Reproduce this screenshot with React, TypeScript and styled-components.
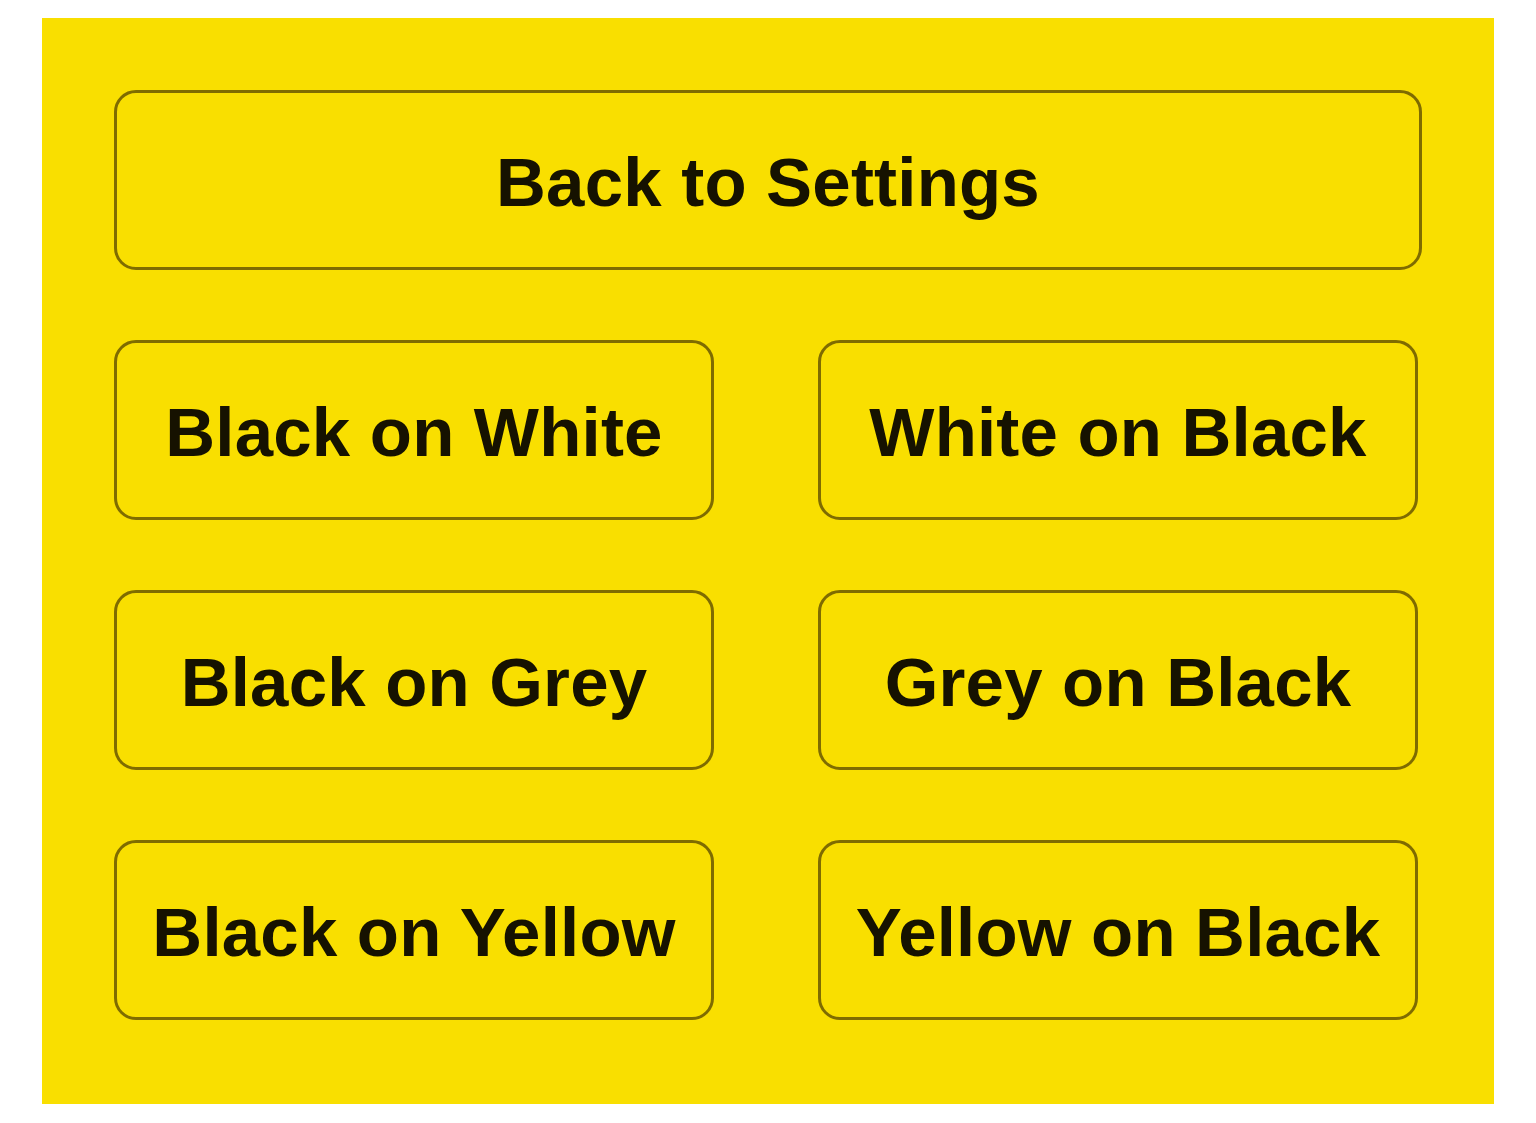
import React from "react";
import styled, { createGlobalStyle } from "styled-components";

const Global = createGlobalStyle`
  html, body { margin: 0; padding: 0; background: #ffffff; }
  body { font-family: "Liberation Sans", Arial, sans-serif; }
`;

const Page = styled.div`
  padding: 18px 0 0 42px;
  width: 1536px;
  height: 1123px;
  box-sizing: border-box;
`;

const Panel = styled.div`
  width: 1452px;
  height: 1086px;
  box-sizing: border-box;
  background: #f9df00;
  padding: 72px 72px 0 72px;
  display: flex;
  flex-direction: column;
  gap: 70px;
`;

const Grid = styled.div`
  display: grid;
  grid-template-columns: 600px 600px;
  column-gap: 104px;
  row-gap: 70px;
`;

const Button = styled.button`
  height: 180px;
  box-sizing: border-box;
  background: transparent;
  border: 3px solid #7f6c00;
  border-radius: 22px;
  display: flex;
  align-items: center;
  justify-content: center;
  font-family: "Liberation Sans", Arial, sans-serif;
  font-weight: 700;
  font-size: 69px;
  letter-spacing: 0.2px;
  color: #161200;
  padding: 4px 0 0 0;
  white-space: nowrap;
`;

const options = [
  "Black on White",
  "White on Black",
  "Black on Grey",
  "Grey on Black",
  "Black on Yellow",
  "Yellow on Black",
];

export default function App() {
  return (
    <>
      <Global />
      <Page>
        <Panel>
          <Button>Back to Settings</Button>
          <Grid>
            {options.map((o) => (
              <Button key={o}>{o}</Button>
            ))}
          </Grid>
        </Panel>
      </Page>
    </>
  );
}
